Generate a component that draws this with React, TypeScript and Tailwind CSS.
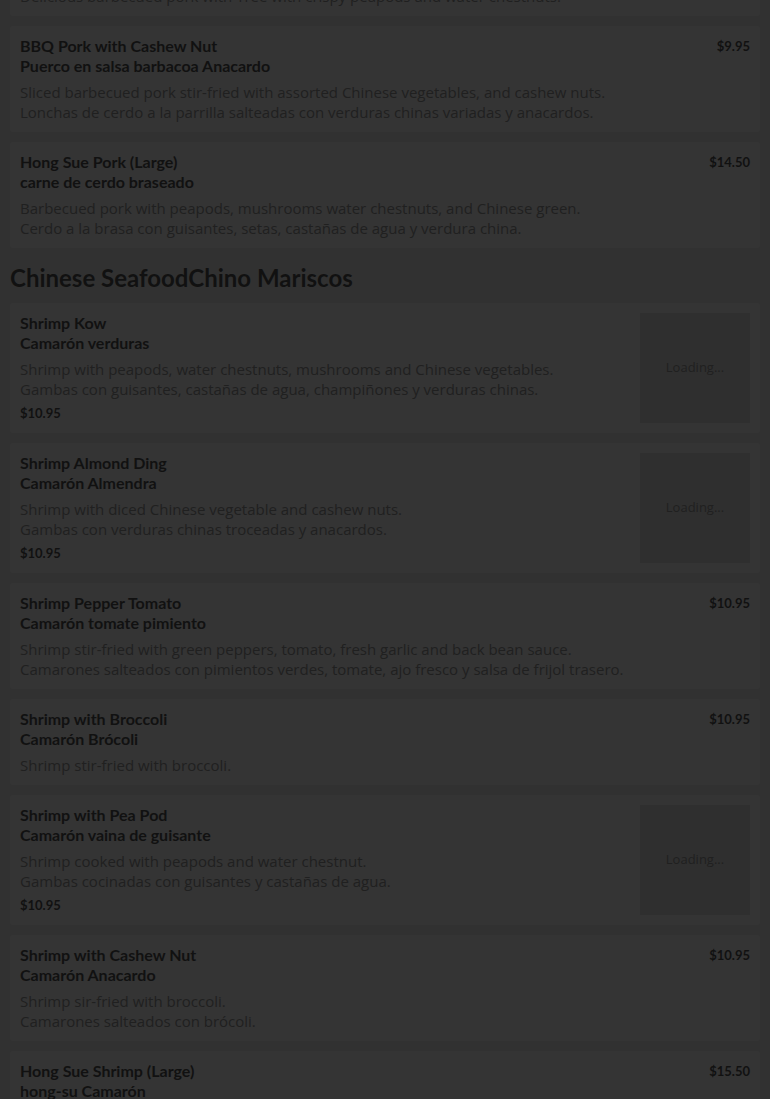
type Item = {
  name: string;
  es: string;
  desc: string[];
  price: string;
  image?: boolean;
};

const pork: Item[] = [
  {
    name: "BBQ Pork with Moo Shu",
    es: "Puerco en salsa barbacoa Moo Shu",
    desc: [
      "Delicious barbecued pork with Moo Shu vegetables.",
      "Delicious barbecued pork with Tree with crispy peapods and water chestnuts.",
    ],
    price: "$9.95",
  },
  {
    name: "BBQ Pork with Cashew Nut",
    es: "Puerco en salsa barbacoa Anacardo",
    desc: [
      "Sliced barbecued pork stir-fried with assorted Chinese vegetables, and cashew nuts.",
      "Lonchas de cerdo a la parrilla salteadas con verduras chinas variadas y anacardos.",
    ],
    price: "$9.95",
  },
  {
    name: "Hong Sue Pork (Large)",
    es: "carne de cerdo braseado",
    desc: [
      "Barbecued pork with peapods, mushrooms water chestnuts, and Chinese green.",
      "Cerdo a la brasa con guisantes, setas, castañas de agua y verdura china.",
    ],
    price: "$14.50",
  },
];

const seafood: Item[] = [
  {
    name: "Shrimp Kow",
    es: "Camarón verduras",
    desc: [
      "Shrimp with peapods, water chestnuts, mushrooms and Chinese vegetables.",
      "Gambas con guisantes, castañas de agua, champiñones y verduras chinas.",
    ],
    price: "$10.95",
    image: true,
  },
  {
    name: "Shrimp Almond Ding",
    es: "Camarón Almendra",
    desc: [
      "Shrimp with diced Chinese vegetable and cashew nuts.",
      "Gambas con verduras chinas troceadas y anacardos.",
    ],
    price: "$10.95",
    image: true,
  },
  {
    name: "Shrimp Pepper Tomato",
    es: "Camarón tomate pimiento",
    desc: [
      "Shrimp stir-fried with green peppers, tomato, fresh garlic and back bean sauce.",
      "Camarones salteados con pimientos verdes, tomate, ajo fresco y salsa de frijol trasero.",
    ],
    price: "$10.95",
  },
  {
    name: "Shrimp with Broccoli",
    es: "Camarón Brócoli",
    desc: ["Shrimp stir-fried with broccoli."],
    price: "$10.95",
  },
  {
    name: "Shrimp with Pea Pod",
    es: "Camarón vaina de guisante",
    desc: [
      "Shrimp cooked with peapods and water chestnut.",
      "Gambas cocinadas con guisantes y castañas de agua.",
    ],
    price: "$10.95",
    image: true,
  },
  {
    name: "Shrimp with Cashew Nut",
    es: "Camarón Anacardo",
    desc: ["Shrimp sir-fried with broccoli.", "Camarones salteados con brócoli."],
    price: "$10.95",
  },
  {
    name: "Hong Sue Shrimp (Large)",
    es: "hong-su Camarón",
    desc: [
      "Shrimp with peapods, mushrooms, water chestnuts and Chinese vegetables.",
      "Gambas con guisantes, setas, castañas de agua y verduras chinas.",
    ],
    price: "$15.50",
  },
];

const MenuCard = ({ item }: { item: Item }) => {
  return (
    <div className="flex justify-between gap-[10px] bg-[#343434] p-[10px] mb-[10px] rounded-[2px]">
      <div className="flex-1 min-w-0">
        <div className="font-['Lato',sans-serif] text-[16px] leading-[20px] font-bold text-[#111111]">
          <p>{item.name}</p>
          <p>{item.es}</p>
        </div>
        <div className="mt-[6px] font-['Open_Sans',sans-serif] text-[15px] leading-[20px] text-[#202020]">
          {item.desc.map((d) => (
            <p key={d}>{d}</p>
          ))}
        </div>
        {item.image && (
          <p className="mt-[4px] font-['Lato',sans-serif] text-[13px] leading-[20px] font-bold text-[#111111]">
            {item.price}
          </p>
        )}
      </div>
      {item.image ? (
        <div className="w-[110px] h-[110px] shrink-0 bg-[#2f2f2f] flex items-center justify-center">
          <span className="font-['Open_Sans',sans-serif] text-[13px] text-[#202020]">Loading...</span>
        </div>
      ) : (
        <p className="font-['Lato',sans-serif] text-[13px] leading-[20px] font-bold text-[#111111] shrink-0">
          {item.price}
        </p>
      )}
    </div>
  );
};

export default function App() {
  return (
    <div className="min-h-screen bg-[#313131] overflow-hidden">
      <div className="px-[10px] -mt-[90px]">
        {pork.map((it) => (
          <MenuCard key={it.name} item={it} />
        ))}
        <h2 className="mt-[14px] mb-[9px] font-['Lato',sans-serif] text-[24px] leading-[32px] font-bold text-[#111111]">
          Chinese SeafoodChino Mariscos
        </h2>
        {seafood.map((it) => (
          <MenuCard key={it.name} item={it} />
        ))}
      </div>
    </div>
  );
}
